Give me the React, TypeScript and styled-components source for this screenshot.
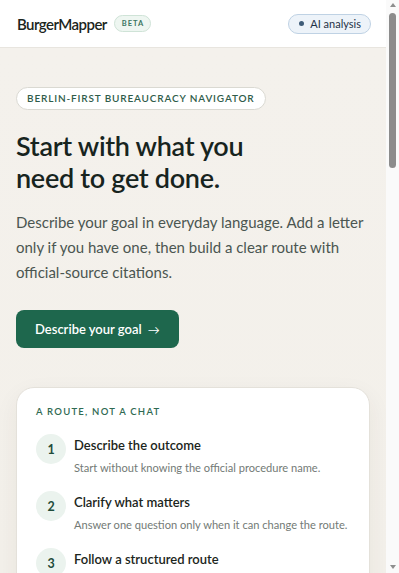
import React from 'react';
import styled, { createGlobalStyle } from 'styled-components';

const GlobalStyle = createGlobalStyle`
  html, body {
    margin: 0;
    padding: 0;
  }
  body {
    font-family: Lato, 'Noto Sans', sans-serif;
    color: #1b2a23;
  }
  * { box-sizing: border-box; }
`

const Page = styled.div`
  height: 100vh;
  display: grid;
  grid-template-columns: 1fr 13px;
  background: #f4f1ec;
`
const Scroller = styled.div`
  overflow-y: auto;
  scrollbar-width: none;
  &::-webkit-scrollbar { display: none; }
`
const Track = styled.div`
  background: #fafafa;
  display: flex;
  flex-direction: column;
  align-items: center;
  padding-top: 3px;
`
const Arrow = styled.span<{ $down?: boolean }>`
  width: 0;
  height: 0;
  border-left: 3.5px solid transparent;
  border-right: 3.5px solid transparent;
  ${p => p.$down
    ? 'border-top: 4px solid #8e8e8e; margin-top: auto; margin-bottom: 4px;'
    : 'border-bottom: 4px solid #8e8e8e;'}
`
const Thumb = styled.div`
  margin-top: 6px;
  width: 7px;
  height: 155px;
  border-radius: 4px;
  background: #8c8c8c;
`

const Header = styled.header`
  height: 48px;
  background: #ffffff;
  border-bottom: 1px solid #e8e5df;
  display: flex;
  align-items: center;
  justify-content: space-between;
  padding: 0 15px 0 17px;
`
const Brand = styled.div`
  display: flex;
  align-items: center;
  gap: 7px;
`
const Logo = styled.span`
  font-size: 15px;
  font-weight: 600;
  letter-spacing: -0.55px;
  color: #1b2520;
`
const Beta = styled.span`
  font-size: 7.5px;
  line-height: 11px;
  font-weight: 700;
  letter-spacing: 1px;
  color: #3b7560;
  background: #eef6f1;
  border: 1px solid #cfe3d7;
  border-radius: 999px;
  padding: 2px 6px 2px 7px;
`
const AiPill = styled.span`
  display: flex;
  align-items: center;
  gap: 6px;
  height: 20px;
  font-size: 11px;
  color: #1f3247;
  background: #edf3f9;
  border: 1px solid #bfd2e4;
  border-radius: 999px;
  padding: 0 9px 0 10px;
  &:before {
    content: '';
    width: 5px;
    height: 5px;
    border-radius: 50%;
    background: #3f5c78;
  }
`

const Main = styled.main`
  display: flex;
  flex-direction: column;
  align-items: flex-start;
  padding: 39px 16px 60px 16px;
  background: linear-gradient(to bottom, #f4f1ec 0, #f1eee6 100%);
`
const Eyebrow = styled.span`
  font-size: 10px;
  line-height: 13px;
  font-weight: 600;
  letter-spacing: 0.85px;
  color: #2f5c4a;
  background: #ffffff;
  border: 1px solid #dad9d2;
  border-radius: 999px;
  padding: 4px 10px;
`
const Title = styled.h1`
  margin: 20px 0 0;
  font-size: 27px;
  line-height: 32px;
  font-weight: 600;
  letter-spacing: -0.3px;
  color: #17241e;
  max-width: 240px;
`
const Lead = styled.p`
  margin: 16px 0 0;
  font-size: 15px;
  line-height: 25px;
  color: #4b5651;
`
const Cta = styled.button`
  margin-top: 25px;
  height: 38px;
  padding: 0 19px;
  border: none;
  border-radius: 8px;
  background: #1e674d;
  color: #ffffff;
  font-family: inherit;
  font-size: 13px;
  font-weight: 600;
  display: flex;
  align-items: center;
  gap: 6px;
`
const CtaArrow = styled.span`
  font-size: 12px;
  font-weight: 400;
`
const Card = styled.section`
  align-self: stretch;
  margin-top: 39px;
  background: #ffffff;
  border: 1px solid #e4e1da;
  border-radius: 18px;
  padding: 18px 14px 20px 19px;
  box-shadow: 0 8px 24px rgba(60, 50, 30, 0.06);
`
const CardLabel = styled.div`
  font-size: 9.5px;
  line-height: 12px;
  font-weight: 600;
  letter-spacing: 1.25px;
  color: #2f6a52;
`
const Steps = styled.ol`
  list-style: none;
  margin: 17px 0 0;
  padding: 0;
  display: flex;
  flex-direction: column;
  gap: 15px;
`
const Step = styled.li`
  display: flex;
  gap: 8px;
  align-items: flex-start;
`
const StepNum = styled.span`
  flex: none;
  width: 30px;
  height: 30px;
  border-radius: 50%;
  background: #ebf3ee;
  color: #1f4c3a;
  font-size: 12.5px;
  font-weight: 700;
  display: flex;
  align-items: center;
  justify-content: center;
  margin-top: -1px;
`
const StepTitle = styled.div`
  font-size: 13px;
  font-weight: 600;
  color: #1b2520;
  line-height: 20px;
`
const StepText = styled.div`
  margin-top: 4px;
  font-size: 11.1px;
  line-height: 18px;
  color: #737a76;
`
const Section = styled.section`
  align-self: stretch;
  margin-top: 40px;
`
const SectionTitle = styled.h2`
  margin: 0 0 14px;
  font-size: 20px;
  font-weight: 600;
  color: #17241e;
`
const Tile = styled.div`
  background: #ffffff;
  border: 1px solid #e4e1da;
  border-radius: 14px;
  padding: 16px 18px;
  margin-bottom: 12px;
  h3 { margin: 0 0 6px; font-size: 13.5px; font-weight: 600; }
  p { margin: 0; font-size: 12px; line-height: 19px; color: #5d6661; }
`
const Footer = styled.footer`
  padding: 24px 16px 40px;
  font-size: 12px;
  color: #6a716d;
  background: #ffffff;
  border-top: 1px solid #e6e3dc;
`

const steps = [
  ['Describe the outcome', 'Start without knowing the official procedure name.'],
  ['Clarify what matters', 'Answer one question only when it can change the route.'],
  ['Follow a structured route', 'Steps, documents and offices, each with its source.'],
  ['Check the sources', 'Every step links back to an official Berlin page.'],
]

const tiles = [
  ['Registering an address', 'Anmeldung, appointments and the documents you need to bring.'],
  ['Residence permits', 'Which office is responsible and what to prepare before you go.'],
  ['Letters from authorities', 'Upload a letter only if you have one and want it explained.'],
  ['Tax and social insurance', 'Find the right form and the office that handles it.'],
  ['Family and children', 'Kindergeld, Elterngeld and birth registration in order.'],
  ['Moving out of Berlin', 'Deregistration and the last steps before you leave.'],
]

const App: React.FC = () => {
  return (
    <Page>
      <GlobalStyle />
      <Scroller>
        <Header>
          <Brand>
            <Logo>BurgerMapper</Logo>
            <Beta>BETA</Beta>
          </Brand>
          <AiPill>AI analysis</AiPill>
        </Header>
        <Main>
          <Eyebrow>BERLIN-FIRST BUREAUCRACY NAVIGATOR</Eyebrow>
          <Title>Start with what you need to get done.</Title>
          <Lead>
            Describe your goal in everyday language. Add a letter only if you have one, then build a clear route with official-source citations.
          </Lead>
          <Cta>Describe your goal <CtaArrow>→</CtaArrow></Cta>
          <Card>
            <CardLabel>A ROUTE, NOT A CHAT</CardLabel>
            <Steps>
              {steps.map(([t, d], i) => (
                <Step key={t}>
                  <StepNum>{i + 1}</StepNum>
                  <div>
                    <StepTitle>{t}</StepTitle>
                    <StepText>{d}</StepText>
                  </div>
                </Step>
              ))}
            </Steps>
          </Card>
          <Section>
            <SectionTitle>Common goals</SectionTitle>
            {tiles.map(([t, d]) => (
              <Tile key={t}>
                <h3>{t}</h3>
                <p>{d}</p>
              </Tile>
            ))}
          </Section>
          <Section>
            <SectionTitle>How sources are cited</SectionTitle>
            <Tile>
              <p>Each step of a route shows where the information comes from: the official service page, the responsible office and the date it was last checked. BurgerMapper does not replace legal advice.</p>
            </Tile>
            <Tile>
              <p>If a source is unclear or out of date, the route says so instead of guessing.</p>
            </Tile>
          </Section>
        </Main>
        <Footer>BurgerMapper · Berlin-first bureaucracy navigator · Beta</Footer>
      </Scroller>
      <Track>
        <Arrow />
        <Thumb />
        <Arrow $down />
      </Track>
    </Page>
  )
}

export default App
